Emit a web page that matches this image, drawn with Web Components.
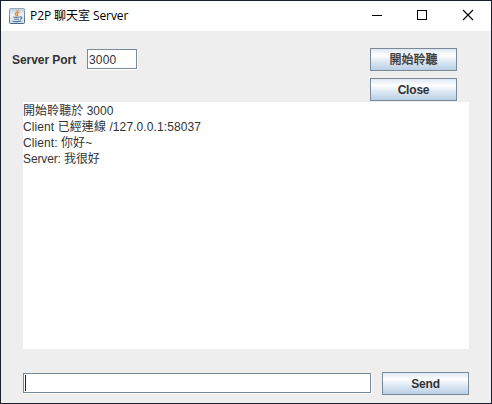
<!DOCTYPE html>
<html lang="zh-Hant">
<head>
<meta charset="utf-8">
<title>P2P 聊天室 Server</title>
<style>
html, body { margin: 0; height: 100%; overflow: hidden; }
body { font: 12px/16px "Liberation Sans", "Noto Sans CJK TC", sans-serif; color: #333; }
</style>
</head>
<body>
<chat-window></chat-window>
<script>
const define = (name, html) => {
  const t = document.createElement('template');
  t.innerHTML = html;
  customElements.define(name, class extends HTMLElement {
    constructor() {
      super();
      this.attachShadow({ mode: 'open' }).append(t.content.cloneNode(true));
    }
  });
};

define('java-icon', `
<style>:host{display:block;width:16px;height:16px} svg{display:block}</style>
<svg width="16" height="16" viewBox="0 0 16 16">
  <defs><linearGradient id="g" x1="0" y1="0" x2="0" y2="1"><stop offset="0" stop-color="#8fa9bd"/><stop offset="1" stop-color="#48667f"/></linearGradient>
  <linearGradient id="f" x1="0" y1="0" x2="0" y2="1"><stop offset="0" stop-color="#b9c8d4"/><stop offset=".4" stop-color="#eef1f3"/><stop offset="1" stop-color="#d5dde3"/></linearGradient></defs>
  <rect x=".5" y=".5" width="15" height="15" rx="1" fill="url(#f)" stroke="url(#g)"/>
  <path d="M9 1.8C9.4 3.8 5.9 4.5 6.3 6.2Q6.5 7 7.6 8M10.4 4.3C7.8 5.2 7.8 5.9 8.6 6.8Q9 7.3 8.2 8.1" fill="none" stroke="#e8862e" stroke-width="1.25"/>
  <path d="M4.3 9Q7 9.8 10.6 9M5 11Q7.5 11.6 10 11M3.4 13.2Q7.5 14 12.2 13.1M10.8 9C13.6 8.2 13.6 10.8 10.9 11.2" fill="none" stroke="#4c7ba3" stroke-width="1.1"/>
</svg>`);

define('title-bar', `
<style>
:host{display:flex;align-items:center;height:30px;background:#fff;color:#000;padding-left:8px;box-sizing:border-box}
.t{flex:1;margin-left:5px;font:12px/16px "Open Sans","Noto Sans CJK TC",sans-serif;white-space:pre;letter-spacing:-.08px}
svg{display:block}
</style>
<java-icon></java-icon><span class="t"><slot></slot></span>
<svg width="136" height="30" shape-rendering="crispEdges" fill="none" stroke="#000">
  <path d="M17 14.5h10M62.5 9.5h9v9h-9z"/>
  <path d="M108 9l10 10M118 9l-10 10" shape-rendering="auto" stroke-width="1.1"/>
</svg>`);

define('metal-button', `
<style>
:host{display:flex;box-sizing:border-box;width:87px;height:23px;border:1px solid #7a8a99;align-items:center;justify-content:center;font-weight:bold;
background:linear-gradient(#dde8f3 0,#fff 30%,#dde8f3 60%,#b8cfe5 100%);line-height:15px;padding-top:1px}
:host([cjk]){font-weight:400;padding-top:2px;-webkit-text-stroke:.3px #333}
:host([tight]){letter-spacing:-.2px}
</style><slot></slot>`);

define('metal-field', `
<style>
:host{display:flex;box-sizing:border-box;height:20px;border:1px solid #7a8a99;background:#fff;box-shadow:1px 1px #fff;align-items:center;padding:1px 0 0 1px;letter-spacing:.2px}
i{display:none;width:1px;height:16px;margin-top:-1px;background:#222}
:host([caret]) i{display:block}
</style><i></i><slot></slot>`);

define('chat-log', `
<style>
:host{display:block;box-sizing:border-box;height:247px;background:#fff;padding-top:1px}
::slotted(div){height:16px;line-height:16px;white-space:pre}
</style><slot></slot>`);

define('chat-window', `
<style>
:host{display:flex;flex-direction:column;box-sizing:border-box;width:492px;height:404px;border:1px solid #1b202d;background:#eee}
.top{display:flex;align-items:flex-start;padding:17px 34px 0 11px;height:54px;box-sizing:content-box}
.label{font-weight:bold;width:75px;line-height:16px;padding-top:4px;white-space:nowrap;letter-spacing:-.05px}
.port{width:50px;margin-top:1px}
.buttons{margin-left:auto;display:flex;flex-direction:column;gap:7px}
chat-log{margin:0 22px}
.l1{letter-spacing:.05px}
.l2{letter-spacing:.09px}
.l3{letter-spacing:.08px}
.l4{letter-spacing:-.12px}
.send{display:flex;padding:23px 22px 0;gap:11px}
.msg{flex:1;margin-top:1px}
</style>
<title-bar>P2P 聊天室 Server</title-bar>
<div class="top">
  <span class="label">Server Port</span>
  <metal-field class="port">3000</metal-field>
  <div class="buttons"><metal-button cjk>開始聆聽</metal-button><metal-button tight>Close</metal-button></div>
</div>
<chat-log><div class="l1">開始聆聽於 3000</div><div class="l2">Client 已經連線 /127.0.0.1:58037</div><div class="l3">Client: 你好~</div><div class="l4">Server: 我很好</div></chat-log>
<div class="send"><metal-field class="msg" caret></metal-field><metal-button tight>Send</metal-button></div>`);
</script>
</body>
</html>
